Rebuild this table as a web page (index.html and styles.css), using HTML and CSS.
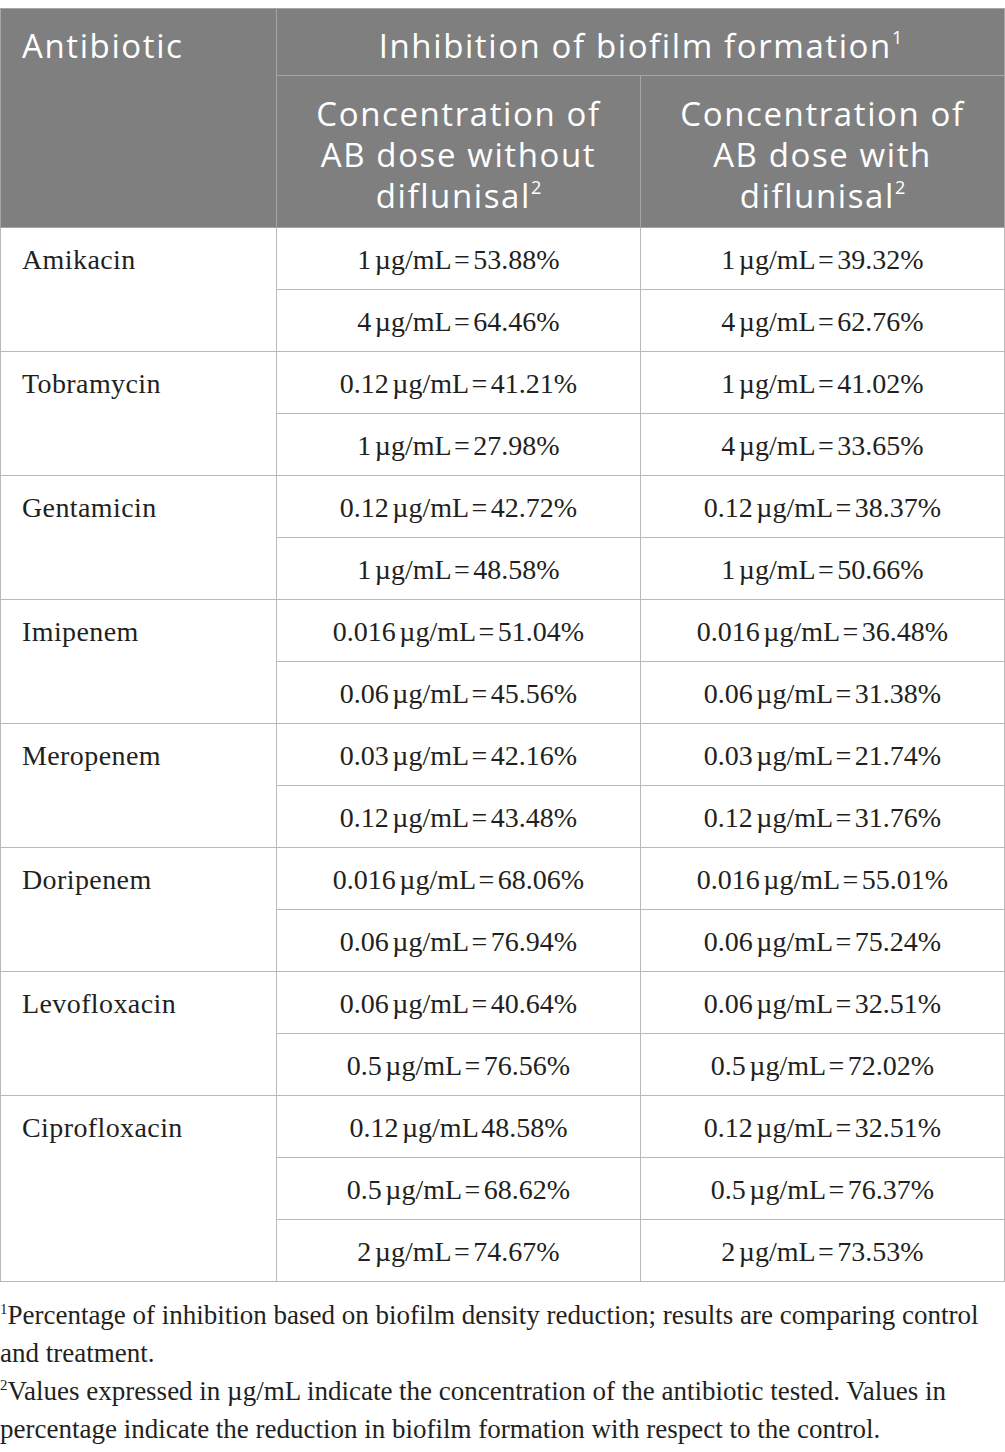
FILE: index.html
```html
<!DOCTYPE html>
<html lang="en">
<head>
    <meta charset="UTF-8">
    <meta name="viewport" content="width=device-width, initial-scale=1.0">
    <title>Inhibition of biofilm formation</title>
    <link rel="stylesheet" href="styles.css">
</head>
<body>
    <div class="page">
        <table class="results">
            <colgroup>
                <col class="col-name">
                <col class="col-dose">
                <col class="col-dose">
            </colgroup>
            <thead>
                <tr class="head-top">
                    <th rowspan="2" class="head-name">Antibiotic</th>
                    <th colspan="2">Inhibition of biofilm formation<sup>1</sup></th>
                </tr>
                <tr class="head-sub">
                    <th>Concentration of<br>AB dose without<br>diflunisal<sup>2</sup></th>
                    <th>Concentration of<br>AB dose with<br>diflunisal<sup>2</sup></th>
                </tr>
            </thead>
            <tbody>
                <tr><td rowspan="2" class="name">Amikacin</td><td>1 µg/mL = 53.88%</td><td>1 µg/mL = 39.32%</td></tr>
                <tr><td>4 µg/mL = 64.46%</td><td>4 µg/mL = 62.76%</td></tr>
                <tr><td rowspan="2" class="name">Tobramycin</td><td>0.12 µg/mL = 41.21%</td><td>1 µg/mL = 41.02%</td></tr>
                <tr><td>1 µg/mL = 27.98%</td><td>4 µg/mL = 33.65%</td></tr>
                <tr><td rowspan="2" class="name">Gentamicin</td><td>0.12 µg/mL = 42.72%</td><td>0.12 µg/mL = 38.37%</td></tr>
                <tr><td>1 µg/mL = 48.58%</td><td>1 µg/mL = 50.66%</td></tr>
                <tr><td rowspan="2" class="name">Imipenem</td><td>0.016 µg/mL = 51.04%</td><td>0.016 µg/mL = 36.48%</td></tr>
                <tr><td>0.06 µg/mL = 45.56%</td><td>0.06 µg/mL = 31.38%</td></tr>
                <tr><td rowspan="2" class="name">Meropenem</td><td>0.03 µg/mL = 42.16%</td><td>0.03 µg/mL = 21.74%</td></tr>
                <tr><td>0.12 µg/mL = 43.48%</td><td>0.12 µg/mL = 31.76%</td></tr>
                <tr><td rowspan="2" class="name">Doripenem</td><td>0.016 µg/mL = 68.06%</td><td>0.016 µg/mL = 55.01%</td></tr>
                <tr><td>0.06 µg/mL = 76.94%</td><td>0.06 µg/mL = 75.24%</td></tr>
                <tr><td rowspan="2" class="name">Levofloxacin</td><td>0.06 µg/mL = 40.64%</td><td>0.06 µg/mL = 32.51%</td></tr>
                <tr><td>0.5 µg/mL = 76.56%</td><td>0.5 µg/mL = 72.02%</td></tr>
                <tr><td rowspan="3" class="name">Ciprofloxacin</td><td>0.12 µg/mL 48.58%</td><td>0.12 µg/mL = 32.51%</td></tr>
                <tr><td>0.5 µg/mL = 68.62%</td><td>0.5 µg/mL = 76.37%</td></tr>
                <tr><td>2 µg/mL = 74.67%</td><td>2 µg/mL = 73.53%</td></tr>
            </tbody>
        </table>
        <div class="notes">
            <p><sup>1</sup>Percentage of inhibition based on biofilm density reduction; results are comparing control and treatment.</p>
            <p><sup>2</sup>Values expressed in µg/mL indicate the concentration of the antibiotic tested. Values in percentage indicate the reduction in biofilm formation with respect to the control.</p>
        </div>
    </div>
</body>
</html>
```

FILE: styles.css
```css
:root {
    --head-bg: #7f7f7f;
    --head-text: #ffffff;
    --head-line: #a6a6a6;
    --cell-line: #b9b9b9;
    --text-color: #231f20;
}

body {
    margin: 0;
    background: #ffffff;
    color: var(--text-color);
    font-family: "Liberation Serif", "Times New Roman", serif;
}

.page {
    padding-top: 8px;
    width: 1004px;
}

.results {
    width: 1004px;
    border-collapse: collapse;
    table-layout: fixed;
}

.col-name {
    width: 276px;
}

.col-dose {
    width: 364px;
}

.results th {
    background: var(--head-bg);
    color: var(--head-text);
    font-family: "Open Sans", "Liberation Sans", sans-serif;
    font-weight: 400;
    font-size: 33px;
    line-height: 41px;
    letter-spacing: 1.6px;
    border: 1px solid var(--head-line);
    text-align: center;
    vertical-align: top;
}

.head-top th {
    height: 67px;
    padding: 16px 6px 0;
    box-sizing: border-box;
}

.head-top .head-name {
    text-align: left;
    padding-left: 21px;
}

.head-sub th {
    height: 152px;
    padding: 17px 6px 0;
    box-sizing: border-box;
}

.results sup {
    font-size: 0.55em;
    line-height: 0;
    letter-spacing: 0;
    vertical-align: 0.75em;
}

.results td {
    height: 59px;
    padding: 2px 10px 0;
    border: 1px solid var(--cell-line);
    font-size: 28px;
    line-height: 32px;
    text-align: center;
    vertical-align: middle;
    word-spacing: -3.5px;
}

.results td.name {
    text-align: left;
    vertical-align: top;
    padding: 16px 10px 0 21px;
    letter-spacing: 0.4px;
    word-spacing: 0;
}

.notes {
    padding-top: 14px;
    font-size: 27px;
    line-height: 38px;
}

.notes p {
    margin: 0;
}

.notes sup {
    font-size: 0.55em;
    line-height: 0;
    vertical-align: 0.7em;
}
```
